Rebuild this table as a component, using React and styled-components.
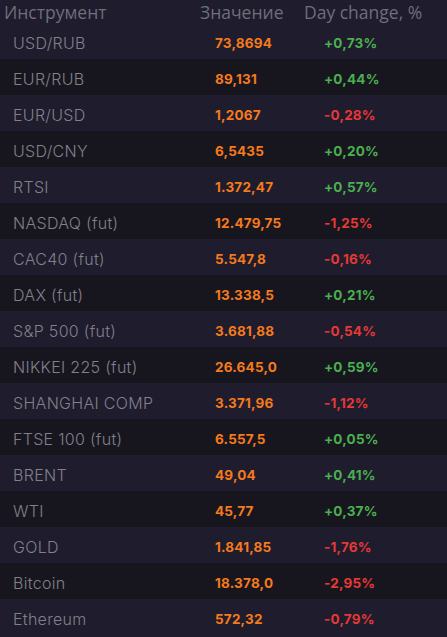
import React from 'react';
import styled, { createGlobalStyle } from 'styled-components';

const GlobalStyle = createGlobalStyle`
  html, body {
    margin: 0;
    padding: 0;
    background: #1e1c2d;
  }
`;

const Table = styled.div`
  width: 447px;
  height: 637px;
  overflow: hidden;
  background: #1e1c2d;
`;

const Header = styled.div`
  display: grid;
  grid-template-columns: 196px 104px 1fr;
  height: 24px;
  margin-bottom: -1px;
  padding-left: 4px;
  align-items: center;
  font-family: 'Open Sans', 'DejaVu Sans', sans-serif;
  font-size: 17.5px;
  color: #6f6e7b;
  white-space: nowrap;
`;

const Row = styled.div`
  display: grid;
  grid-template-columns: 202px 109px 1fr;
  height: 36px;
  padding: 3px 0 0 13px;
  box-sizing: border-box;
  align-items: center;
  background: ${(p) => (p.$dark ? '#17161f' : '#1e1c2d')};
  white-space: nowrap;
`;

const Name = styled.span`
  font-family: Inter, 'Noto Sans', sans-serif;
  font-weight: 300;
  font-size: 16px;
  letter-spacing: 0.3px;
  color: #81808b;
`;

const Value = styled.span`
  font-family: Inter, 'Noto Sans', sans-serif;
  font-weight: 700;
  font-size: 13.5px;
  letter-spacing: 0.2px;
  color: #f57a1c;
`;

const Change = styled(Value)`
  color: ${(p) => (p.$up ? '#4caf50' : '#e53935')};
`;

const data = [
  ['USD/RUB', '73,8694', '+0,73%'],
  ['EUR/RUB', '89,131', '+0,44%'],
  ['EUR/USD', '1,2067', '-0,28%'],
  ['USD/CNY', '6,5435', '+0,20%'],
  ['RTSI', '1.372,47', '+0,57%'],
  ['NASDAQ (fut)', '12.479,75', '-1,25%'],
  ['CAC40 (fut)', '5.547,8', '-0,16%'],
  ['DAX (fut)', '13.338,5', '+0,21%'],
  ['S&P 500 (fut)', '3.681,88', '-0,54%'],
  ['NIKKEI 225 (fut)', '26.645,0', '+0,59%'],
  ['SHANGHAI COMP', '3.371,96', '-1,12%'],
  ['FTSE 100 (fut)', '6.557,5', '+0,05%'],
  ['BRENT', '49,04', '+0,41%'],
  ['WTI', '45,77', '+0,37%'],
  ['GOLD', '1.841,85', '-1,76%'],
  ['Bitcoin', '18.378,0', '-2,95%'],
  ['Ethereum', '572,32', '-0,79%'],
];

const App = () => {
  return (
    <Table>
      <GlobalStyle />
      <Header>
        <span>Инструмент</span>
        <span>Значение</span>
        <span>Day change, %</span>
      </Header>
      {data.map(([name, value, change], i) => (
        <Row key={name} $dark={i % 2 === 1}>
          <Name>{name}</Name>
          <Value>{value}</Value>
          <Change $up={change.startsWith('+')}>{change}</Change>
        </Row>
      ))}
    </Table>
  );
};

export default App;
